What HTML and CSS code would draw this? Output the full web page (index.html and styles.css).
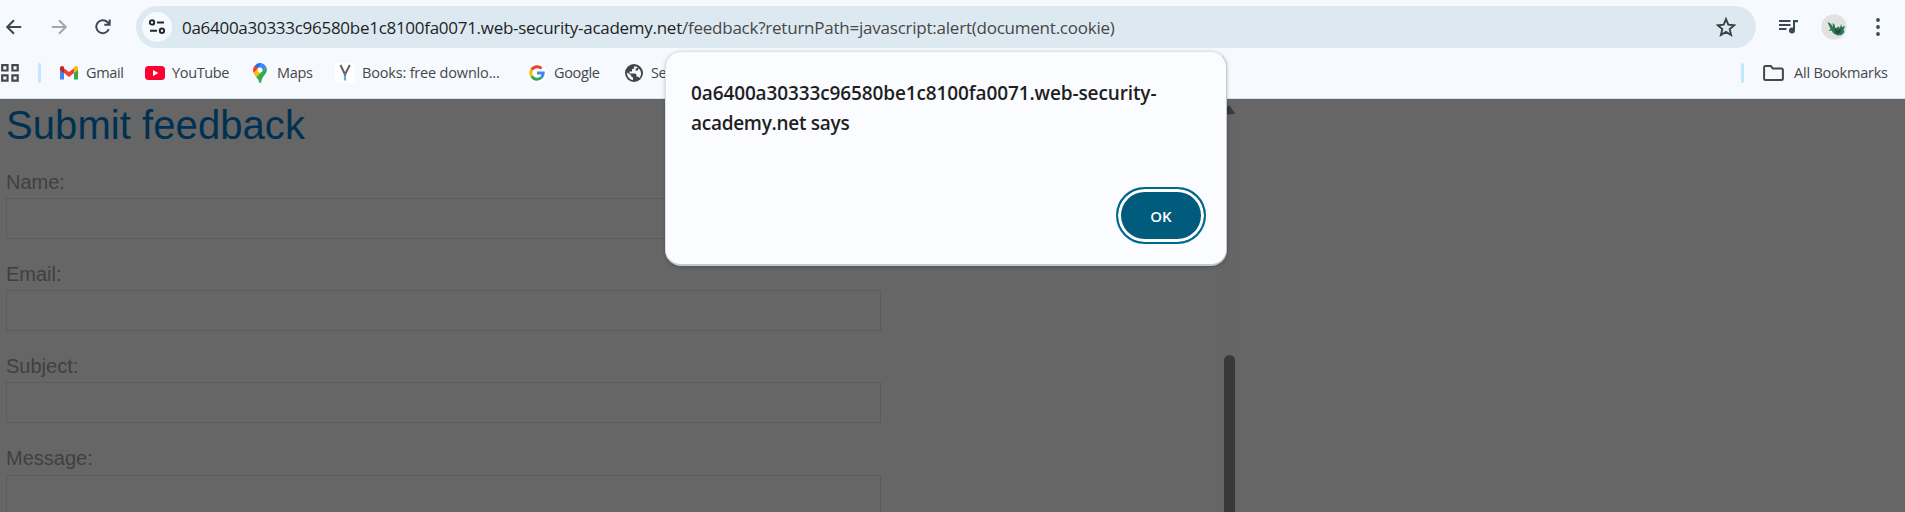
FILE: index.html
```html
<!DOCTYPE html>
<html lang="en">
<head>
<meta charset="utf-8">
<title>Submit feedback</title>
<link rel="stylesheet" href="styles.css">
</head>
<body>
<header class="chrome">
  <div class="toolbar">
    <svg class="nav back" viewBox="0 0 16 16"><path d="M15.2 8H1.5M8 1.2 1.2 8 8 14.8"/></svg>
    <svg class="nav forward" viewBox="0 0 16 16"><path d="M.8 8h13.7M8 1.2 14.8 8 8 14.8"/></svg>
    <svg class="nav reload" viewBox="0 0 16 16"><path d="M13.8 10.2A6.5 6.5 0 1 1 12.6 3.3L14.6 5.4M14.7.5V5.7H9.3"/></svg>
    <div class="omnibox">
      <span class="site"><svg viewBox="0 0 16 16" width="16" height="16"><g fill="none" stroke="#1f2a30" stroke-width="2"><circle cx="3" cy="3.4" r="2.2"/><path d="M8 3.4h7M1 11.8h7"/><circle cx="13" cy="11.8" r="2.2"/></g></svg></span>
      <span class="url"><span class="host">0a6400a30333c96580be1c8100fa0071.web-security-academy.net</span><span class="path">/feedback?returnPath=javascript:alert(document.cookie)</span></span>
      <svg class="star" viewBox="0 0 20 20"><path d="m10 2.1 2.3 5.6 6 .5-4.6 3.9 1.4 5.9L10 14.9 4.900 18l1.400-5.900L1.700 8.200l6-.5z"/></svg>
    </div>
    <svg class="media" viewBox="0 0 20 16"><path d="M0 2h11.500M0 6h11.500M0 10h7.500" stroke="#3a4a55" stroke-width="2"/><path d="M14 1h5v2.300h-3V11h-2z" fill="#3a4a55"/><circle cx="13" cy="11.400" r="3" fill="#3a4a55"/></svg>
    <svg class="avatar" viewBox="0 0 26 26"><circle cx="13" cy="13" r="12.700" fill="#e1e3e2"/><path d="m6.500 8 3 1.500 2.500 3.500-.5-4 2 1.500 1 4 3-2 1.500 1.500 1-4 1 3 3-1-1.500 4 1 2-3 3-4 .5-4-2-2-3-3 .5 2-2z" fill="#2c7652"/><path d="m14 14 3 3 3-3-1 5-4 .5z" fill="#174b38"/></svg>
    <svg class="dots" viewBox="0 0 4 18"><circle cx="2" cy="2" r="1.900"/><circle cx="2" cy="9" r="1.900"/><circle cx="2" cy="16" r="1.900"/></svg>
  </div>
  <nav class="bookmarks">
    <svg class="apps" viewBox="0 0 18 18"><path d="M1.200 1.200h5.300v5.300H1.200zM11.400 1.200h5.300v5.300h-5.300zM1.200 11.400h5.300v5.300H1.200zM11.400 11.400h5.300v5.300h-5.300z"/></svg>
    <i class="divider"></i>
    <a class="bm gmail"><svg viewBox="0 0 20 20"><path d="M1 5v11.500h4V9z" fill="#4285f4"/><path d="M19 5v11.500h-4V9z" fill="#34a853"/><path d="M5 5.200 10 9l5-3.800V10l-5 4-5-4z" fill="#ea4335"/><path d="M1 5.500C1 2.500 3.500 2.500 5 4v6L1 7z" fill="#c5221f"/><path d="M19 5.500c0-3-2.500-3-4-1.500v6l4-3z" fill="#fbbc04"/></svg><span>Gmail</span></a>
    <a class="bm youtube"><svg viewBox="0 0 20 20"><rect y="3" width="20" height="14" rx="3.500" fill="#f03"/><path d="m8 7 5.300 3L8 13z" fill="#fff"/></svg><span>YouTube</span></a>
    <a class="bm maps"><svg viewBox="0 0 20 20"><path d="M5 2.500A7 7 0 0 1 12.200.4L5.500 8z" fill="#1a73e8"/><path d="M5 2.500 8 5 3.800 10.200C2.500 7.500 2.800 4.800 5 2.500z" fill="#ea4335"/><path d="M12.200.4c2 .6 3.300 1.900 4.100 3.600L12 8.500 8 5z" fill="#4285f4"/><path d="M3.800 10.200 8 5l4 3.500-5.700 6.200z" fill="#fbbc04"/><path d="M16.300 4c2.300 5.500-2.500 7.500-4.300 12-.8 2.500-.8 4-1.900 4s-1.100-2-1.800-3.300l-2-2.500z" fill="#34a853"/><circle cx="10" cy="7" r="2.500" fill="#fff"/></svg><span>Maps</span></a>
    <a class="bm books"><svg viewBox="0 0 20 20"><path fill="#fff" d="M0 0h20v20H0z"/><path d="m5.500 2 4.500 9.500L14.800 2" fill="none" stroke="#606060" stroke-width="2"/><path d="M10 10.500v3" stroke="#777" stroke-width="2.200"/><path d="M10 13.500v4" stroke="#55b5d5" stroke-width="2.200"/></svg><span>Books: free downlo...</span></a>
    <a class="bm google"><svg viewBox="0 0 20 20"><circle cx="10" cy="10" r="10" fill="#fff"/><g fill="none" stroke-width="3"><path d="M4.700 6.800A6.200 6.200 0 0 1 14.500 5.500" stroke="#ea4335"/><path d="M4.700 13.200a6.200 6.200 0 0 1 0-6.400" stroke="#fbbc04"/><path d="M14.300 14.500a6.200 6.200 0 0 1-9.600-1.300" stroke="#34a853"/><path d="M10 10h6.200c0 2-.7 3.500-1.900 4.500" stroke="#4285f4"/></g></svg><span>Google</span></a>
    <a class="bm globe"><svg viewBox="0 0 20 20"><circle cx="10" cy="10" r="9" fill="#414548"/><path d="M10 3.200c.6 2-.4 2.800-2 3v2.200H5.500v2h5c1.500 0 2 .9 2 2.300v1h1.800l1.300 1.200c2.400-3.400 1.600-7.300-1-9.600C14.300 8 12.300 8 11.700 7.500V5.300h2L13 3.800z" fill="#f6f9fe"/><path d="M2.900 9.500c0 4 2.600 7 6.100 7.400v-2.500c-1.300 0-2-1-2-2.300z" fill="#f6f9fe"/></svg><span>Settings</span></a>
    <i class="divider end"></i>
    <a class="bm all"><svg class="folder" viewBox="0 0 21 16"><path d="M2.600 1.100h5.200l2 2.300h8.600q1.500 0 1.500 1.500v8.500q0 1.500-1.500 1.500H2.600q-1.500 0-1.500-1.500V2.600q0-1.500 1.500-1.500z"/></svg><span>All Bookmarks</span></a>
  </nav>
</header>
<main class="page">
  <form class="feedback">
    <h1>Submit feedback</h1>
    <label>Name:</label><div class="field"></div>
    <label>Email:</label><div class="field"></div>
    <label>Subject:</label><div class="field"></div>
    <label>Message:</label><div class="field message"></div>
  </form>
  <div class="scrollbar"><svg viewBox="0 0 12 10" width="12" height="10"><path d="M6 1 11 8.500H1z" fill="#383838" stroke="#383838" stroke-linejoin="round" stroke-width="1.500"/></svg><i class="thumb"></i></div>
</main>
<section class="dialog" role="alertdialog">
  <p><span class="line1">0a6400a30333c96580be1c8100fa0071.web-security-</span><br><span class="line2">academy.net says</span></p>
  <button>OK</button>
</section>
</body>
</html>
```

FILE: styles.css
```css
* { box-sizing: border-box; }
body {
  margin: 0;
  width: 1905px;
  height: 512px;
  overflow: hidden;
  background: #666;
  font-family: "Open Sans", "Noto Sans", sans-serif;
}
.chrome { height: 99px; background: #f6f9fe; border-bottom: 1px solid #d3e2eb; }
svg { display: block; flex: none; }

.toolbar { display: flex; align-items: center; height: 54px; padding-left: 6px; }
.nav { width: 16px; height: 16px; fill: none; stroke: #3a4a55; stroke-width: 2; }
.forward { margin-left: 29px; stroke: #a3a7ab; }
.reload { margin-left: 28px; margin-right: 25px; }
.omnibox {
  display: flex;
  align-items: center;
  width: 1620px;
  height: 42px;
  padding: 0 20px 0 6px;
  border-radius: 21px;
  background: #dce9f1;
}
.site { display: grid; place-items: center; width: 30px; height: 30px; border-radius: 50%; background: #f6f9fe; }
.url { flex: 1; margin-left: 10px; padding-top: 2px; font-size: 17px; line-height: 24px; white-space: nowrap; color: #474747; }
.host { color: #1f1f1f; letter-spacing: -0.28px; }
.path { letter-spacing: -0.23px; }
.star { width: 20px; height: 20px; fill: none; stroke: #3c4043; stroke-width: 1.9; }
.media { width: 20px; height: 16px; margin-left: 23px; }
.avatar { width: 26px; height: 26px; margin-left: 22px; }
.dots { width: 4px; height: 18px; margin-left: 29px; fill: #3a4a55; }

.bookmarks { display: flex; align-items: center; height: 38px; padding-left: 1px; font-size: 14.5px; color: #474747; }
.apps { width: 18px; height: 18px; fill: none; stroke: #45494d; stroke-width: 2.2; }
.divider { flex: none; width: 3px; height: 20px; margin-left: 19px; border-radius: 2px; background: #c2e7ff; }
.bm { display: flex; align-items: center; flex: none; white-space: nowrap; letter-spacing: -0.35px; line-height: 20px; }
.bm svg { width: 20px; height: 20px; margin-right: 7px; }
.gmail { width: 86px; margin-left: 18px; }
.youtube { width: 105px; }
.maps { width: 85px; }
.books { width: 192px; letter-spacing: -0.18px; }
.google { width: 97px; }
.globe { width: 90px; }
.end { margin-left: auto; }
.all { width: 142px; margin-left: 19px; letter-spacing: -0.22px; }
.bm .folder { width: 21px; height: 16px; margin-right: 10px; fill: none; stroke: #474747; stroke-width: 2; }

.page { display: flex; height: 413px; overflow: hidden; font-family: "Liberation Sans", Arial, sans-serif; }
.feedback { width: 875px; margin-left: 6px; }
h1 { margin: 0; padding-top: 3px; height: 70px; font-size: 40px; line-height: 46px; font-weight: 400; letter-spacing: 0.07px; color: #003152; }
label { display: block; height: 29px; font-size: 20px; line-height: 26px; color: #404040; }
.field { height: 41px; margin-bottom: 22px; border: 1px solid #5b5b5b; }
.message { height: 90px; margin-top: 1px; }
.scrollbar { display: flex; flex-direction: column; align-items: center; width: 18px; margin-left: 339px; padding-top: 6px; background: #656565; }
.thumb { flex: none; width: 11px; height: 300px; margin-top: 240px; border-radius: 6px; background: #383838; }

.dialog {
  position: absolute;
  left: 665px;
  top: 51px;
  width: 562px;
  height: 215px;
  padding: 26px 20px 20px 25px;
  border: 1px solid #dbe3e7;
  border-bottom: 2px solid #c3c9cb;
  border-right-color: #c3c9cb;
  border-radius: 16px;
  background: #fbfcff;
  box-shadow: 0 1px 4px rgba(0, 0, 0, .2);
  display: flex;
  flex-direction: column;
  justify-content: space-between;
}
.dialog p { margin: 0; font-size: 19px; line-height: 30px; font-weight: 600; color: #1f1f1f; white-space: nowrap; }
.line1 { letter-spacing: -0.12px; }
.line2 { letter-spacing: -0.28px; }
button {
  align-self: flex-end;
  width: 90px;
  height: 57px;
  padding: 0;
  border: 2px solid #006a8e;
  border-radius: 29px;
  background: #005b7d;
  box-shadow: inset 0 0 0 3px #fff;
  color: #fff;
  font: 600 15px "Open Sans", "Noto Sans", sans-serif;
}
```
